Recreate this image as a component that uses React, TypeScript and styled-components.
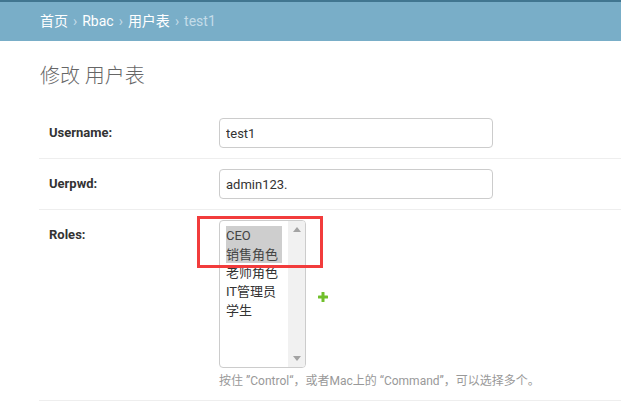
import React from "react";
import styled, { createGlobalStyle } from "styled-components";

const GlobalStyle = createGlobalStyle`
  html, body {
    margin: 0;
    padding: 0;
    background: #fff;
  }
  body {
    font-family: Roboto, "Noto Sans CJK SC", "DejaVu Sans", sans-serif;
    color: #333;
    font-size: 14px;
  }
  * { box-sizing: border-box; }
`;

const Header = styled.div`
  border-top: 2px solid #417690;
`;

const Breadcrumbs = styled.div`
  background: #79aec8;
  padding: 10px 40px;
  font-size: 14px;
  line-height: 19px;
  color: #c4dce8;
  display: flex;
  gap: 5px;
  align-items: center;
`;

const Crumb = styled.a`
  color: #fff;
  text-decoration: none;
`;

const Sep = styled.span`
  color: #c4dce8;
`;

const Content = styled.div`
  padding: 23px 0 0 39px;
`;

const Title = styled.h1`
  margin: 0 0 20px 1px;
  font-size: 20px;
  line-height: 24px;
  font-weight: 300;
  color: #666;
`;

const Row = styled.div<{ $last?: boolean }>`
  position: relative;
  display: flex;
  align-items: flex-start;
  padding: 10px 10px ${(p) => (p.$last ? "11px" : "10px")} 10px;
  border-bottom: 1px solid #eee;
`;

const Label = styled.label`
  width: 170px;
  flex-shrink: 0;
  font-size: 13px;
  line-height: 30px;
  font-weight: bold;
  color: #333;
`;

const Field = styled.div`
  display: flex;
  flex-direction: column;
`;

const Input = styled.input`
  width: 274px;
  height: 30px;
  border: 1px solid #ccc;
  border-radius: 4px;
  padding: 5px 6px;
  font-family: Roboto, "Noto Sans CJK SC", sans-serif;
  font-size: 13px;
  color: #333;
  outline: none;
`;

const SelectLine = styled.div`
  display: flex;
  align-items: center;
  gap: 12px;
`;

const ListBox = styled.div`
  width: 87px;
  height: 148px;
  border: 1px solid #ccc;
  border-radius: 4px;
  overflow: hidden;
  display: flex;
  background: #fff;
`;

const Options = styled.div`
  flex: 1;
  padding: 5px 6px;
  display: flex;
  flex-direction: column;
`;

const Option = styled.div<{ $selected?: boolean }>`
  font-size: 13px;
  line-height: 19px;
  height: ${(p) => (p.$selected ? "18.5px" : "19px")};
  color: ${(p) => (p.$selected ? "#444" : "#333")};
  background: ${(p) => (p.$selected ? "#cecece" : "transparent")};
  white-space: nowrap;
`;

const ScrollTrack = styled.div`
  width: 17px;
  background: #f1f1f1;
  display: flex;
  flex-direction: column;
  justify-content: space-between;
  align-items: center;
  padding: 6px 0;
`;

const Help = styled.div`
  margin-top: 6px;
  font-size: 12px;
  line-height: 15px;
  color: #999;
  white-space: nowrap;
`;

const AddLink = styled.a`
  display: inline-flex;
  width: 10px;
  height: 10px;
  margin-top: 5px;
`;

const Highlight = styled.div`
  position: absolute;
  left: 158px;
  top: 6px;
  width: 126px;
  height: 52px;
  border: 3px solid #f23c3c;
  pointer-events: none;
`;

const Arrow = ({ down }: { down?: boolean }) => (
  <svg width="8" height="5" viewBox="0 0 8 5">
    <path d={down ? "M0 0 H8 L4 5 Z" : "M0 5 H8 L4 0 Z"} fill="#a3a3a3" />
  </svg>
);

const PlusIcon = () => (
  <svg width="10" height="10" viewBox="0 0 10 10">
    <rect x="3.5" y="0" width="3" height="10" rx="0.6" fill="#70bf2b" />
    <rect x="0" y="3.5" width="10" height="3" rx="0.6" fill="#70bf2b" />
  </svg>
);

const roles = [
  { name: "CEO", selected: true },
  { name: "销售角色", selected: true },
  { name: "老师角色" },
  { name: "IT管理员" },
  { name: "学生" },
];

export default function App() {
  return (
    <>
      <GlobalStyle />
      <Header>
        <Breadcrumbs>
          <Crumb href="#">首页</Crumb>
          <Sep>›</Sep>
          <Crumb href="#">Rbac</Crumb>
          <Sep>›</Sep>
          <Crumb href="#">用户表</Crumb>
          <Sep>›</Sep>
          <span>test1</span>
        </Breadcrumbs>
      </Header>
      <Content>
        <Title>修改 用户表</Title>
        <Row>
          <Label>Username:</Label>
          <Field>
            <Input defaultValue="test1" />
          </Field>
        </Row>
        <Row>
          <Label>Uerpwd:</Label>
          <Field>
            <Input defaultValue="admin123." />
          </Field>
        </Row>
        <Row $last>
          <Label>Roles:</Label>
          <Field>
            <SelectLine>
              <ListBox>
                <Options>
                  {roles.map((r) => (
                    <Option key={r.name} $selected={r.selected}>
                      {r.name}
                    </Option>
                  ))}
                </Options>
                <ScrollTrack>
                  <Arrow />
                  <Arrow down />
                </ScrollTrack>
              </ListBox>
              <AddLink href="#">
                <PlusIcon />
              </AddLink>
            </SelectLine>
            <Help>按住 ”Control“，或者Mac上的 “Command”，可以选择多个。</Help>
          </Field>
          <Highlight />
        </Row>
      </Content>
    </>
  );
}
